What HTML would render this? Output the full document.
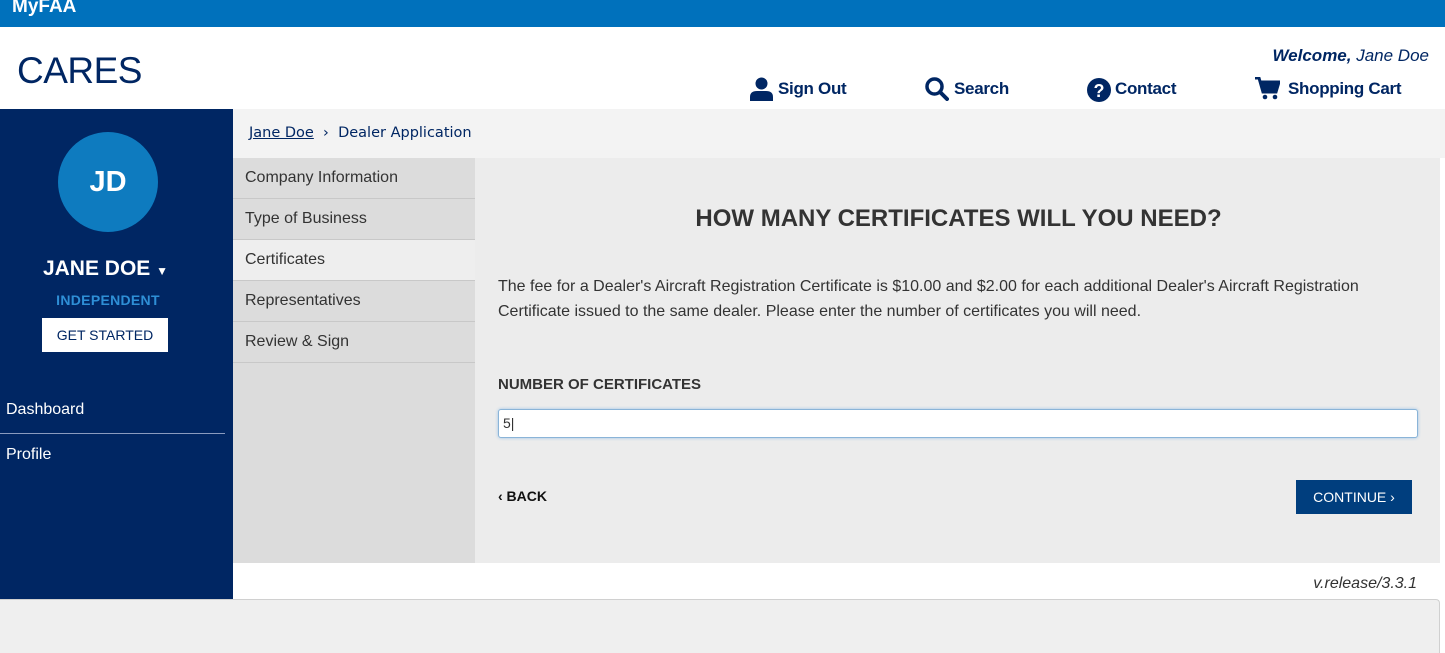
<!DOCTYPE html>
<html><head><meta charset="utf-8"><style>
*{margin:0;padding:0;box-sizing:border-box}
body{width:1445px;height:653px;overflow:hidden;background:#fff;font-family:"Liberation Sans",Arial,sans-serif;position:relative}
.a{position:absolute}
.nav{font-size:16px;color:#333;}
.nav div{position:absolute;left:233px;width:242px;height:41px;border-bottom:1px solid #c8c8c8;padding:11px 0 0 12px}
.hi{font-weight:bold;font-size:17px;color:#002663;top:79px;letter-spacing:-0.3px}
</style></head><body>
<div class="a" style="left:0;top:0;width:1445px;height:27px;background:#0071bc"></div>
<div class="a" style="left:12px;top:-4px;color:#fff;font-size:19px;font-weight:bold">MyFAA</div>
<div class="a" style="left:17px;top:50px;font-size:37px;color:#002663;letter-spacing:-0.5px">CARES</div>
<div class="a" style="right:16px;top:46px;font-size:17px;color:#002663;font-style:italic"><b>Welcome,</b> Jane Doe</div>
<svg class="a" style="left:749px;top:77px" width="25" height="24" viewBox="0 0 25 24"><circle cx="12.5" cy="6.5" r="6" fill="#002663"/><path d="M1 24v-4q0-6 7-6h9q7 0 7 6v4z" fill="#002663"/></svg>
<div class="a hi" style="left:778px">Sign Out</div>
<svg class="a" style="left:925px;top:77px" width="24" height="24" viewBox="0 0 24 24"><circle cx="9.5" cy="9.5" r="7.5" fill="none" stroke="#002663" stroke-width="3.5"/><path d="M15 15l7 7" stroke="#002663" stroke-width="4" stroke-linecap="round"/></svg>
<div class="a hi" style="left:954px">Search</div>
<svg class="a" style="left:1087px;top:78px" width="24" height="24" viewBox="0 0 24 24"><circle cx="12" cy="12" r="12" fill="#002663"/><text x="12" y="19" text-anchor="middle" font-family="Liberation Sans" font-weight="bold" font-size="18" fill="#fff">?</text></svg>
<div class="a hi" style="left:1115px">Contact</div>
<svg class="a" style="left:1255px;top:77px" width="25" height="23" viewBox="0 0 25 23"><path d="M0 1h4l4 14h13l3-10H6" fill="none" stroke="#002663" stroke-width="3"/><path d="M6 5h18l-3 10H8z" fill="#002663"/><circle cx="10" cy="20" r="2.3" fill="#002663"/><circle cx="20" cy="20" r="2.3" fill="#002663"/></svg>
<div class="a hi" style="left:1288px">Shopping Cart</div>

<div class="a" style="left:0;top:109px;width:233px;height:490px;background:#002663"></div>
<div class="a" style="left:58px;top:132px;width:100px;height:100px;border-radius:50%;background:#0e7bbf;color:#fff;font-size:29px;font-weight:bold;text-align:center;line-height:100px">JD</div>
<div class="a" style="left:0;top:257px;width:211px;text-align:center;color:#fff;font-size:21px;font-weight:bold">JANE DOE <span style="font-size:12px">▼</span></div>
<div class="a" style="left:0;top:292px;width:216px;text-align:center;color:#2e8fd6;font-size:14px;font-weight:bold;letter-spacing:.3px">INDEPENDENT</div>
<div class="a" style="left:42px;top:318px;width:126px;height:34px;background:#fff;color:#002663;font-size:14px;text-align:center;line-height:34px">GET STARTED</div>
<div class="a" style="left:6px;top:401px;color:#fff;font-size:16px">Dashboard</div>
<div class="a" style="left:0;top:433px;width:225px;height:1px;background:#8a9bbf"></div>
<div class="a" style="left:6px;top:446px;color:#fff;font-size:16px">Profile</div>

<div class="a" style="left:233px;top:109px;width:1212px;height:49px;background:#f3f3f3"></div>
<div class="a" style="left:249px;top:125px;font-family:'DejaVu Sans',sans-serif;font-size:14.5px;color:#002663"><u>Jane Doe</u> &nbsp;›&nbsp; Dealer Application</div>
<div class="a" style="left:233px;top:158px;width:242px;height:405px;background:#dcdcdc"></div>
<div class="nav">
<div style="top:158px">Company Information</div>
<div style="top:199px">Type of Business</div>
<div style="top:240px;background:#eeeeee">Certificates</div>
<div style="top:281px">Representatives</div>
<div style="top:322px">Review &amp; Sign</div>
</div>
<div class="a" style="left:475px;top:158px;width:965px;height:405px;background:#ececec"></div>
<div class="a" style="left:475px;top:205px;width:967px;text-align:center;font-size:24px;font-weight:bold;color:#333">HOW MANY CERTIFICATES WILL YOU NEED?</div>
<div class="a" style="left:498px;top:274px;width:900px;font-size:16px;line-height:25px;color:#333">The fee for a Dealer's Aircraft Registration Certificate is $10.00 and $2.00 for each additional Dealer's Aircraft Registration Certificate issued to the same dealer. Please enter the number of certificates you will need.</div>
<div class="a" style="left:498px;top:376px;font-size:15px;font-weight:bold;color:#333">NUMBER OF CERTIFICATES</div>
<div class="a" style="left:498px;top:409px;width:920px;height:29px;background:#fff;border:1px solid #8ab4d8;border-radius:3px;box-shadow:0 0 3px #9cc3e6;font-size:14px;padding:5px 4px;color:#333">5|</div>
<div class="a" style="left:498px;top:488px;font-size:14px;font-weight:bold;color:#111">‹ BACK</div>
<div class="a" style="left:1296px;top:480px;width:116px;height:34px;background:#003e7e;color:#fff;font-size:14px;text-align:center;line-height:34px">CONTINUE ›</div>
<div class="a" style="right:28px;top:575px;font-size:16px;font-style:italic;color:#333">v.release/3.3.1</div>
<div class="a" style="left:0;top:599px;width:1440px;height:54px;background:#efefef;border-top:1px solid #d0d0d0;border-right:1px solid #d0d0d0;border-top-right-radius:4px"></div>
</body></html>
